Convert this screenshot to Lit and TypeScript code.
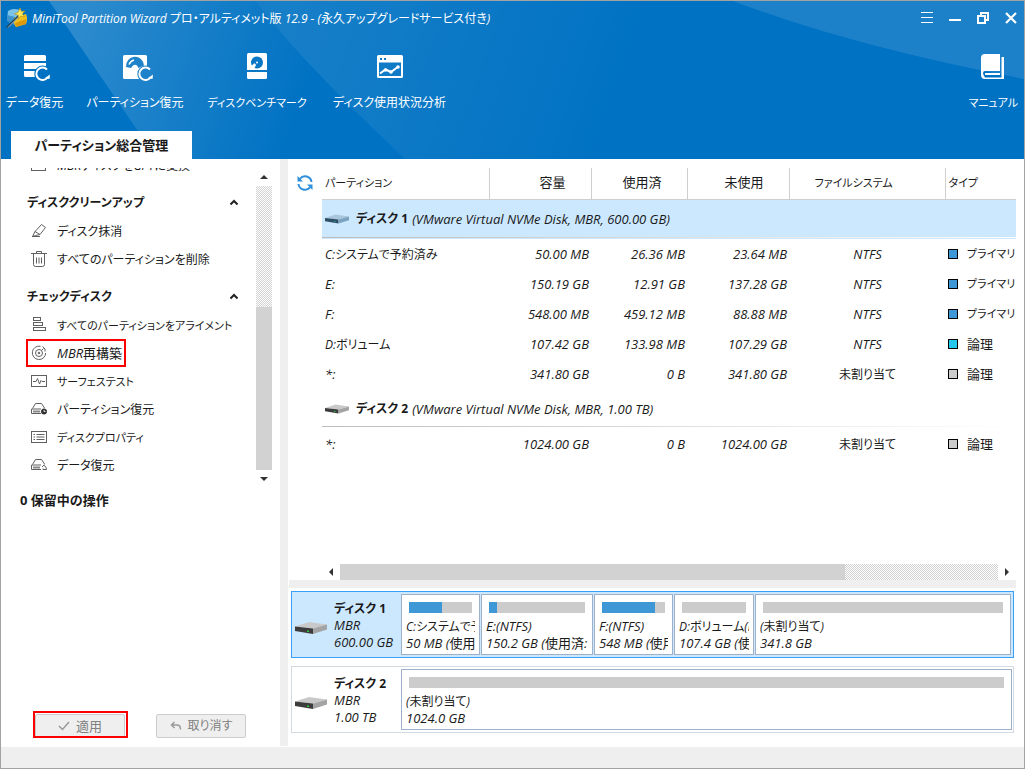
import { LitElement, html, css, svg, nothing } from "lit";
import { customElement, state } from "lit/decorators.js";
import { classMap } from "lit/directives/class-map.js";

type Partition = {
  name: string;
  size: string;
  used: string;
  free: string;
  fs: string;
  kind: string;
  swatch: string;
};

type Block = { title: string; detail: string; width?: number; fill: number };

type Disk = {
  name: string;
  model: string;
  scheme: string;
  capacity: string;
  partitions: Partition[];
  blocks: Block[];
};

const disks: Disk[] = [
  {
    name: "ディスク 1",
    model: "(VMware Virtual NVMe Disk, MBR, 600.00 GB)",
    scheme: "MBR",
    capacity: "600.00 GB",
    partitions: [
      { name: "C:システムで予約済み", size: "50.00 MB", used: "26.36 MB", free: "23.64 MB", fs: "NTFS", kind: "プライマリ", swatch: "primary" },
      { name: "E:", size: "150.19 GB", used: "12.91 GB", free: "137.28 GB", fs: "NTFS", kind: "プライマリ", swatch: "primary" },
      { name: "F:", size: "548.00 MB", used: "459.12 MB", free: "88.88 MB", fs: "NTFS", kind: "プライマリ", swatch: "primary" },
      { name: "D:ボリューム", size: "107.42 GB", used: "133.98 MB", free: "107.29 GB", fs: "NTFS", kind: "論理", swatch: "logical" },
      { name: "*:", size: "341.80 GB", used: "0 B", free: "341.80 GB", fs: "未割り当て", kind: "論理", swatch: "empty" },
    ],
    blocks: [
      { title: "C:システムで予", detail: "50 MB (使用", width: 79, fill: 52 },
      { title: "E:(NTFS)", detail: "150.2 GB (使用済:", width: 112, fill: 8 },
      { title: "F:(NTFS)", detail: "548 MB (使用", width: 79, fill: 84 },
      { title: "D:ボリューム(N", detail: "107.4 GB (使", width: 80, fill: 0 },
      { title: "(未割り当て)", detail: "341.8 GB", fill: 0 },
    ],
  },
  {
    name: "ディスク 2",
    model: "(VMware Virtual NVMe Disk, MBR, 1.00 TB)",
    scheme: "MBR",
    capacity: "1.00 TB",
    partitions: [
      { name: "*:", size: "1024.00 GB", used: "0 B", free: "1024.00 GB", fs: "未割り当て", kind: "論理", swatch: "empty" },
    ],
    blocks: [{ title: "(未割り当て)", detail: "1024.0 GB", fill: 0 }],
  },
];

const menu = [
  { title: "", items: [["convert", "MBRディスクをGPTに変換"]] },
  { title: "ディスククリーンアップ", items: [["eraser", "ディスク抹消"], ["trash", "すべてのパーティションを削除"]] },
  {
    title: "チェックディスク",
    items: [
      ["align", "すべてのパーティションをアライメント"],
      ["rebuild", "MBR再構築"],
      ["surface", "サーフェステスト"],
      ["driveClock", "パーティション復元"],
      ["list", "ディスクプロパティ"],
      ["driveBack", "データ復元"],
    ],
  },
];

const sized = (text: string) => {
  const kana = /[\u3040-\u30ff]/.test(text);
  const mixed = /[\u4e00-\u9fffA-Z]/.test(text);
  return html`<span class=${!kana ? "t13" : mixed ? "t12" : "t11"}>${text}</span>`;
};

const smallIcons: Record<string, unknown> = {
  convert: svg`<rect x="2.5" y="1.5" width="11" height="7"/><rect x=".5" y="9.5" width="14" height="4"/>`,
  eraser: svg`<path d="M4 8.500 10.500 1.500 14.500 4.500 9 11.500 4.500 12.500 1.500 13.500ZM4 8.500 9 11.500M1 13.500H9"/>`,
  trash: svg`<path d="M0 2.500H16M5.500 2V.5H10.500V2M2.500 3V13.500Q2.500 15.500 4.500 15.500H11.500Q13.500 15.500 13.500 13.500V3M5.500 6.500V12.500M8 6.500V12.500M10.500 6.500V12.500"/>`,
  align: svg`<rect x="2.500" y=".5" width="7" height="3"/><rect x="2.500" y="5.500" width="9" height="3"/><rect x="2.500" y="10.500" width="12" height="3"/>`,
  rebuild: svg`<path d="M9.500 1.300A6.700 6.700 0 1 0 14.700 8M11.500 1.500 14 4V6.500"/><circle cx="8" cy="8" r="3.500"/><circle cx="8" cy="8" r=".8" fill="#555"/><path d="M10.500 5.500 12.500 3.500"/>`,
  surface: svg`<rect x=".5" y="2.500" width="15" height="11"/><path d="M2 8.500H5L6.500 5.500 8.500 11 10 7.500 11 8.500H14"/>`,
  driveClock: svg`<path d="M1.500 7.500 4.500 2.500H10.500L13.500 7M.5 8V12.500H10M.5 8H10"/><path d="M2 10.500H9" stroke-width="2" stroke="#888"/><circle cx="13" cy="10.500" r="2.600" fill="#333" stroke="#333"/><path d="M13 9V10.500H14.500" stroke="#fff" stroke-width=".8"/>`,
  list: svg`<rect x=".5" y="2.500" width="15" height="11"/><path d="M2.500 5.500H4M5.500 5.500H13.500M2.500 8H4M5.500 8H13.500M2.500 10.500H4M5.500 10.500H13.500"/>`,
  driveBack: svg`<path d="M1.500 7.500 4.500 2.500H10.500L13.500 7M.5 8V12.500H10M.5 8H10"/><path d="M2 10.500H9" stroke-width="2" stroke="#888"/><path d="M13.500 7.500 11 10M13 8.500Q15.500 9.500 15.500 12.500H12V11.500"/>`,
};

const smallIcon = (name: string) => html`
  <svg class="small-icon" viewBox="0 0 16 16" width="16" height="16" aria-hidden="true">${smallIcons[name]}</svg>
`;

const bigIcons: Record<string, unknown> = {
  data: svg`
    <g transform="translate(1 0)">
      <mask id="cutData"><rect width="40" height="40" fill="#fff"/><circle cx="20.700" cy="21" r="8.400" fill="#000"/></mask>
      <path mask="url(#cutData)" d="M2 3.500Q2 2 3.500 2H22.500Q24 2 24 3.500V8H2ZM2 10H24V16H2ZM2 18H24V24H3.500Q2 24 2 22.500Z" fill="#fff"/>
      <path d="M25 16.500A6.200 6.200 0 1 0 25.500 24.500" fill="none" stroke="#fff" stroke-width="2"/>
      <path d="M28 21.500 27.500 26 23 25Z" fill="#fff"/>
    </g>`,
  partition: svg`
    <g transform="translate(2 0)">
      <mask id="cutPartition">
        <rect width="40" height="40" fill="#fff"/>
        <path d="M3 14A9 9.500 0 0 1 21 12.500L15.500 15 14 12.500A3 3 0 0 0 9.500 13L8 15Z" fill="#000"/>
        <circle cx="22.700" cy="21" r="8.400" fill="#000"/>
      </mask>
      <path mask="url(#cutPartition)" d="M0 3.500Q0 2 1.500 2H22.500Q24 2 24 3.500V26H1.500Q0 26 0 24.500Z" fill="#fff"/>
      <path d="M6 11.500Q7.500 8 11 7" fill="none" stroke="#fff" stroke-width="1.500"/>
      <circle cx="12" cy="13.500" r="1.300" fill="#fff"/>
      <path d="M27 16.500A6.200 6.200 0 1 0 27.500 24.500" fill="none" stroke="#fff" stroke-width="2"/>
      <path d="M30 21.500 29.500 26 25 25Z" fill="#fff"/>
    </g>`,
  bench: svg`
    <mask id="cutBench">
      <rect width="28" height="28" fill="#fff"/>
      <circle cx="14" cy="9.500" r="6" fill="#000"/>
      <path d="M7 9H13V12L11 16H7Z" fill="#fff"/>
      <path d="M8 9.500A6 6 0 0 0 10 14L13.500 10V8H8.200Z" fill="#000"/>
      <path d="M8 13 12.500 9.500 13.500 11 10.500 15.500Z" fill="#fff"/>
      <circle cx="14" cy="9.500" r="2.400" fill="#000"/>
      <circle cx="14" cy="9.500" r="1" fill="#fff"/>
    </mask>
    <path mask="url(#cutBench)" d="M4 1.500Q4 0 5.500 0H22.500Q24 0 24 1.500V17H4Z" fill="#fff"/>
    <path d="M4 19H24V24.500Q24 26 22.500 26H5.500Q4 26 4 24.500Z" fill="#fff"/>`,
  usage: svg`
    <path fill-rule="evenodd" d="M1 3.500Q1 2 2.500 2H25.500Q27 2 27 3.500V23.500Q27 25 25.500 25H2.500Q1 25 1 23.500ZM3 9.500V23H25V9.500ZM4 5H6V7H4ZM8 5H10V7H8Z" fill="#fff"/>
    <path d="M4 20.500 9.500 16.500 15 19 22.500 13.500" fill="none" stroke="#fff" stroke-width="2"/>
    <circle cx="9.500" cy="17" r="1.800" fill="#fff"/><circle cx="15" cy="19" r="1.800" fill="#fff"/><circle cx="22" cy="14" r="1.800" fill="#fff"/>`,
  book: svg`
    <path d="M2 5Q2 1 6 1H21V18H6Q4 18 4 20T6 24.500H22.500V4H25V26H6Q2 26 2 22Z" fill="#fff"/>
    <path d="M6 21H21" stroke="#fff" stroke-width="2"/>`,
};

const bigIcon = (name: string) => html`
  <svg class="big-icon" viewBox="0 0 28 28" width="28" height="28" aria-hidden="true">${bigIcons[name]}</svg>
`;

const drive = (cls: string, blue = false) => html`
  <svg class=${cls} viewBox="0 0 32 12" aria-hidden="true">
    <path d="M0 4.500 14 0 32 2.500 18 6.500Z" fill=${blue ? "#a9c6dc" : "#c9c9c9"} />
    <path d="M0 4.500 18 6.500V12L0 9Z" fill=${blue ? "#2d4f66" : "#3c3c3c"} />
    <path d="M18 6.500 32 2.500V7.500L18 12Z" fill=${blue ? "#7ba2bf" : "#a4a4a4"} />
    <rect x="12" y="8.500" width="2" height="1.500" fill=${blue ? "#2f9a9a" : "#2fbf3a"} />
  </svg>
`;

const arrow = (d: string) => html`
  <svg viewBox="0 0 8 8" width="8" height="8" aria-hidden="true"><path d=${d} fill="#333" /></svg>
`;

@customElement("app-root")
export class AppRoot extends LitElement {
  @state() private selectedDisk = 0;

  static styles = css`
    :host {
      display: block;
      --jp: "Open Sans", "Noto Sans CJK JP", sans-serif;
      --panel: #efefef;
      font: italic 13px/18px var(--jp);
      font-synthesis: none;
      font-feature-settings: "palt";
      color: #1a1a1a;
    }
    * { box-sizing: border-box; }
    button {
      font: inherit;
      font-feature-settings: inherit;
      color: inherit;
      background: none;
      border: 0;
      padding: 0;
      margin: 0;
      white-space: nowrap;
    }
    svg { display: block; flex: none; }
    .t11 { font-size: 11px; }
    .t12 { font-size: 12px; }
    .t13 { font-size: 13px; }
    .window {
      min-height: 100vh;
      display: flex;
      flex-direction: column;
      border: 1px solid #a2a2a2;
      background: #fff;
    }

    .header { display: grid; background: #0072c3; color: #fff; }
    .backdrop { grid-area: 1 / 1; width: 100%; height: 158px; }
    .header-content { grid-area: 1 / 1; display: flex; flex-direction: column; min-width: 0; }
    .titlebar { display: flex; align-items: center; height: 34px; padding: 0 5px; }
    .title { margin: 0 0 0 4px; padding-top: 2px; flex: 1; font-size: 12px; font-weight: 400; white-space: nowrap; }
    .window-controls { display: flex; gap: 12px; }
    .toolbar { display: flex; justify-content: space-between; padding: 18px 6px 0 5px; height: 96px; }
    .tools { display: grid; grid-template-columns: 57px 94px 100px 115px; column-gap: 25px; align-items: start; }
    .tool { display: flex; flex-direction: column; align-items: center; gap: 13px; }
    .big-icon { overflow: visible; }
    .tab {
      align-self: flex-start;
      height: 28px;
      margin-left: 10px;
      width: 181px;
      background: #fff;
      color: #1a1a1a;
      font-style: normal;
      font-weight: 700;
    }

    .body { flex: 1; display: flex; padding-bottom: 1px; }
    .side {
      width: 287px;
      flex: none;
      display: flex;
      flex-direction: column;
      border-right: 8px solid var(--panel);
      padding: 9px 0 8px;
    }
    .scroller { display: flex; height: 320px; }
    .tree {
      flex: 1;
      min-width: 0;
      overflow: hidden;
      display: flex;
      flex-direction: column;
      justify-content: flex-end;
      padding-bottom: 9px;
    }
    .group-head {
      flex: none;
      display: flex;
      align-items: center;
      justify-content: space-between;
      height: 28px;
      margin-top: 10px;
      padding: 0 18px 0 26px;
      width: 100%;
      font-size: 12px;
      font-style: normal;
      font-weight: 700;
    }
    .entry {
      position: relative;
      display: flex;
      align-items: center;
      gap: 10px;
      height: 28px;
      margin-left: 25px;
      padding: 0 4px 0 5px;
    }
    .entry .t11, .entry .t12 { padding-top: 2px; }
    .marked::after {
      content: "";
      position: absolute;
      inset: 0;
      border: 2px solid #fa0000;
    }
    .small-icon { fill: none; stroke: #606060; stroke-width: 1; }
    .vbar { width: 16px; margin-right: 8px; display: flex; flex-direction: column; align-items: center; }
    .vbar .track { width: 16px; flex: 1; }
    .vbar .thumb { width: 16px; height: 163px; }
    .vend { height: 18px; display: flex; align-items: center; }
    .track { background: repeating-conic-gradient(#d2d2d2 0 25%, #fff 0 50%) 0 0 / 2px 2px; }
    .thumb { background: #d2d2d2; }
    .pending { margin: 0; padding-left: 19px; line-height: 24px; font-size: 13px; font-style: normal; font-weight: 700; }
    .actions { margin-top: auto; padding-left: 34px; display: flex; gap: 31px; }
    .action {
      position: relative;
      width: 90px;
      height: 24px;
      display: flex;
      align-items: center;
      justify-content: center;
      gap: 6px;
      border: 1px solid #cccccc;
      border-radius: 2px;
      background: #efefef;
      color: #808080;
    }
    .action.marked::after { inset: -4px -4px -1px -3px; }

    .main { flex: 1; min-width: 0; display: flex; flex-direction: column; padding: 9px 8px 0 1px; }
    .listing { display: flex; flex: 1; }
    .refresh { width: 33px; height: 30px; padding-right: 2px; display: flex; align-items: center; justify-content: center; flex: none; }
    .table-wrap { flex: 1; min-width: 0; }
    table { width: 100%; border-collapse: collapse; table-layout: fixed; }
    th { height: 31px; padding: 0 25px 2px; font-weight: 400; text-align: right; border-bottom: 1px solid #cfcfcf; border-right: 1px solid #cfcfcf; white-space: nowrap; }
    th:last-child { border-right: 0; }
    th.name { text-align: left; padding: 0 3px 2px; }
    th.left { text-align: left; }
    .c-name { width: 167px; }
    .c-size { width: 102px; }
    .c-used { width: 96px; }
    .c-fs { width: 156px; }
    td { height: 30px; padding: 0 2px 0 3px; text-align: right; white-space: nowrap; }
    td.name { text-align: left; }
    td.fs { text-align: center; }
    td.kind { text-align: left; padding-right: 0; }
    .kind-in { display: flex; align-items: center; gap: 9px; }
    .swatch { width: 10px; height: 10px; border: 1px solid #000; flex: none; }
    .primary { background: #3f98d6; }
    .logical { background: #25c7ec; }
    .empty { background: #cccccc; }
    td.disk {
      height: 40px;
      text-align: left;
      background: linear-gradient(90deg, #bcbcbc, #fff) 0 37px / 100% 1px no-repeat;
    }
    .chosen td.disk { background-color: #cce8ff; }
    .disk-in { display: flex; align-items: center; }
    .drive-small { width: 24px; height: 10px; margin-right: 7px; }
    .disk-name { font-size: 12px; font-style: normal; font-weight: 700; margin-right: 4px; }
    .hbar { display: flex; align-items: center; padding-left: 33px; height: 16px; }
    .hend { width: 18px; display: flex; justify-content: center; flex: none; }
    .hbar .thumb { flex: 505; height: 16px; }
    .hbar .track { flex: 153; height: 16px; }
    .split { height: 8px; background: var(--panel); margin-bottom: 3px; }

    .maps { display: flex; flex-direction: column; gap: 8px; padding: 0 2px 13px; }
    .map { display: flex; border: 1px solid #d3dae0; height: 67px; padding: 2px 1px; cursor: default; }
    .map.chosen { border-color: #3aa0f7; background: #cce8ff; padding-right: 2px; }
    .map-head { width: 108px; flex: none; display: flex; align-items: center; gap: 7px; padding: 2px 0 0 2px; text-align: left; line-height: 17px; }
    .drive-large { width: 32px; height: 12px; margin-top: 4px; }
    .map-text { display: flex; flex-direction: column; }
    .blocks { flex: 1; min-width: 0; display: flex; gap: 1px; }
    .block { border: 1px solid #9fb0ca; background: #fff; padding: 7px 4px 0; overflow: hidden; line-height: 17px; white-space: nowrap; flex: none; }
    .block.grow { flex: 1; min-width: 0; }
    .bar { height: 11px; margin: 0 3px 5px; background: #cccccc; }
    .fill { height: 11px; background: #3f98d6; }
    .cut { overflow: hidden; height: 17px; }
    .status { height: 21px; background: var(--panel); }
  `;

  render() {
    return html`
      <div class="window">
        ${this.renderHeader()}
        <div class="body">${this.renderSide()} ${this.renderMain()}</div>
        <footer class="status"></footer>
      </div>
    `;
  }

  private renderHeader() {
    const tools = [["data", "データ復元"], ["partition", "パーティション復元"], ["bench", "ディスクベンチマーク"], ["usage", "ディスク使用状況分析"]];
    return html`
      <header class="header">
        <svg class="backdrop" viewBox="0 0 1023 158" preserveAspectRatio="none" aria-hidden="true">
          <defs>
            <linearGradient id="rayA" gradientUnits="userSpaceOnUse" x1="80" y1="30" x2="300" y2="110">
              <stop offset="0" stop-color="#fff" stop-opacity=".17" />
              <stop offset="1" stop-color="#fff" stop-opacity="0" />
            </linearGradient>
            <linearGradient id="rayB" gradientUnits="userSpaceOnUse" x1="300" y1="0" x2="620" y2="110">
              <stop offset="0" stop-color="#fff" stop-opacity=".09" />
              <stop offset="1" stop-color="#fff" stop-opacity="0" />
            </linearGradient>
          </defs>
          <path d="M75 0Q76 26 141 130L158 158H404Q290 50 255 0Z" fill="none" />
          <path d="M48 0 66 26Q100 76 156 158H404Q290 50 255 0Z" fill="url(#rayA)" />
          <path d="M255 0Q290 50 404 158H700V0Z" fill="url(#rayB)" />
          <path d="M732 0Q850 45 1023 78V0Z" fill="#fff" fill-opacity=".11" />
        </svg>
        <div class="header-content">
          <div class="titlebar">
            <svg viewBox="0 0 22 22" width="22" height="22" aria-hidden="true">
              <path d="M2 4Q8 0 16 4L18 11 8 17 1 13Z" fill="#7cc3ea" />
              <path d="M1 8 9 10 8 18 1 14Z" fill="#3f93cc" />
              <path d="M8 11 20 7Q22 12 20 17L10 20Q7 17 8 11Z" fill="#f2c21c" />
              <path d="M9 16 20 12 20 17 10 20Z" fill="#d99a10" />
              <path d="M1 20.500 13 8.500" stroke="#1f4258" stroke-width="2" />
              <path d="M2 20.500 13 9.500" stroke="#dfe9ee" stroke-width=".7" />
              <path d="M14 1 15.300 4.500 19 4 16.300 6.800 18.500 10 14.800 9 12.500 12 12.200 8.200 8.500 6.800 12.200 5.200Z" fill="#ffe95c" stroke="#b98912" stroke-width=".6" />
            </svg>
            <h1 class="title">MiniTool Partition Wizard プロ・アルティメット版 12.9 - (永久アップグレードサービス付き)</h1>
            <div class="window-controls">
              ${[
                ["メニュー", svg`<path d="M2 2.500H14M2 7.500H14M2 12.500H14" stroke="#fff"/>`],
                ["最小化", svg`<path d="M2 10H14" stroke="#fff" stroke-width="2"/>`],
                ["元に戻す", svg`<path d="M6 5V3H13V10H10.500" fill="none" stroke="#fff" stroke-width="2"/><path d="M3 6H10V13H3Z" fill="none" stroke="#fff" stroke-width="2"/>`],
                ["閉じる", svg`<path d="M3 3 13 13M13 3 3 13" stroke="#fff" stroke-width="2.200"/>`],
              ].map(([label, shape]) => html`<button aria-label=${label}><svg viewBox="0 0 16 16" width="16" height="16">${shape}</svg></button>`)}
            </div>
          </div>
          <nav class="toolbar">
            <div class="tools">
              ${tools.map(([icon, label]) => html`<button class="tool">${bigIcon(icon)}${sized(label)}</button>`)}
            </div>
            <div><button class="tool">${bigIcon("book")}${sized("マニュアル")}</button></div>
          </nav>
          <button class="tab">パーティション総合管理</button>
        </div>
      </header>
    `;
  }

  private renderSide() {
    return html`
      <aside class="side">
        <div class="scroller">
          <div class="tree">
            ${menu.map(
              (group) => html`
                ${group.title
                  ? html`<button class="group-head">
                      <span>${group.title}</span>
                      <svg viewBox="0 0 8 8" width="8" height="8" aria-hidden="true"><path d="M.5 5.500 4 2 7.500 5.500" fill="none" stroke="#222" stroke-width="2" /></svg>
                    </button>`
                  : nothing}
                ${group.items.map(
                  ([icon, label]) => html`<div><button class=${classMap({ entry: true, marked: icon === "rebuild" })}>${smallIcon(icon)}${sized(label)}</button></div>`,
                )}
              `,
            )}
          </div>
          <div class="vbar">
            <div class="vend">${arrow("M0 6 4 2 8 6Z")}</div>
            <div class="track"></div>
            <div class="thumb"></div>
            <div class="vend">${arrow("M0 2 4 6 8 2Z")}</div>
          </div>
        </div>
        <h2 class="pending">0 保留中の操作</h2>
        <div class="actions">
          <button class="action marked">
            <svg viewBox="0 0 12 12" width="12" height="12" aria-hidden="true"><path d="M1 6 4.500 9.500 11 2" fill="none" stroke="#999" stroke-width="1.500" /></svg>
            <span>適用</span>
          </button>
          <button class="action">
            <svg viewBox="0 0 12 12" width="12" height="12" aria-hidden="true"><path d="M4.500 2 1.500 5 4.500 8M1.500 5H7Q10.500 5 10.500 9.500" fill="none" stroke="#999" stroke-width="1.500" /></svg>
            ${sized("取り消す")}
          </button>
        </div>
      </aside>
    `;
  }

  private renderMain() {
    return html`
      <main class="main">
        <div class="listing">
          <button class="refresh" aria-label="更新">
            <svg viewBox="0 0 16 16" width="16" height="16">
              <path d="M14.500 7A6.500 6.500 0 0 0 3 3.700M1.500 9A6.500 6.500 0 0 0 13 12.300" fill="none" stroke="#2f8fdc" stroke-width="2" />
              <path d="M.5 1V6.500H6ZM15.500 15V9.500H10Z" fill="#2f8fdc" />
            </svg>
          </button>
          <div class="table-wrap">${this.renderTable()}</div>
        </div>
        <div class="hbar">
          <div class="hend">${arrow("M6 0 2 4 6 8Z")}</div>
          <div class="thumb"></div>
          <div class="track"></div>
          <div class="hend">${arrow("M2 0 6 4 2 8Z")}</div>
        </div>
        <div class="split"></div>
        <section class="maps">${disks.map((d, i) => this.renderMap(d, i))}</section>
      </main>
    `;
  }

  private renderTable() {
    return html`
      <table>
        <colgroup>
          <col class="c-name" /><col class="c-size" /><col class="c-used" /><col class="c-size" /><col class="c-fs" /><col />
        </colgroup>
        <thead>
          <tr>
            <th class="name">${sized("パーティション")}</th>
            <th>容量</th>
            <th>使用済</th>
            <th>未使用</th>
            <th class="left">${sized("ファイルシステム")}</th>
            <th class="name">${sized("タイプ")}</th>
          </tr>
        </thead>
        ${disks.map(
          (d, i) => html`
            <tbody>
              <tr class=${classMap({ chosen: i === this.selectedDisk })} @click=${() => (this.selectedDisk = i)}>
                <td class="disk" colspan="6">
                  <div class="disk-in">
                    ${drive("drive-small", i === this.selectedDisk)}
                    <span class="disk-name">${d.name}</span><span>${d.model}</span>
                  </div>
                </td>
              </tr>
              ${d.partitions.map(
                (p) => html`
                  <tr>
                    <td class="name">${sized(p.name)}</td>
                    <td>${p.size}</td>
                    <td>${p.used}</td>
                    <td>${p.free}</td>
                    <td class="fs">${sized(p.fs)}</td>
                    <td class="kind"><div class="kind-in"><span class="swatch ${p.swatch}"></span>${sized(p.kind)}</div></td>
                  </tr>
                `,
              )}
            </tbody>
          `,
        )}
      </table>
    `;
  }

  private renderMap(d: Disk, i: number) {
    return html`
      <div class=${classMap({ map: true, chosen: i === this.selectedDisk })}>
        <button class="map-head" @click=${() => (this.selectedDisk = i)}>
          ${drive("drive-large")}
          <span class="map-text"><span class="disk-name">${d.name}</span><span>${d.scheme}</span><span>${d.capacity}</span></span>
        </button>
        <div class="blocks">
          ${d.blocks.map(
            (b) => html`
              <div class=${classMap({ block: true, grow: !b.width })} style=${b.width ? `width:${b.width}px` : nothing}>
                <div class="bar"><div class="fill" style="width:${b.fill}%"></div></div>
                <div class="cut">${sized(b.title)}</div>
                <div class="cut">${b.detail}</div>
              </div>
            `,
          )}
        </div>
      </div>
    `;
  }
}
